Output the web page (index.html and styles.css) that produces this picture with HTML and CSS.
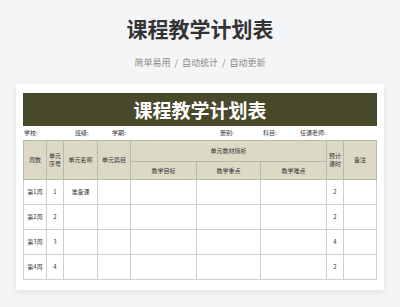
FILE: index.html
```html
<!DOCTYPE html>
<html lang="zh">
<head>
<meta charset="utf-8">
<title>课程教学计划表</title>
<link rel="stylesheet" href="styles.css">
</head>
<body>
<header class="hero">
  <h1 class="hero-title">课程教学计划表</h1>
  <p class="hero-sub"><span>简单易用</span><span class="sep">/</span><span>自动统计</span><span class="sep">/</span><span>自动更新</span></p>
</header>
<main class="card">
  <div class="banner">课程教学计划表</div>
  <div class="info">
    <span class="f-school">学校:</span>
    <span class="f-class">班级:</span>
    <span class="f-term">学期:</span>
    <span class="f-book">册别:</span>
    <span class="f-subject">科目:</span>
    <span class="f-teacher">任课老师:</span>
  </div>
  <table class="plan">
    <colgroup>
      <col class="c1"><col class="c2"><col class="c3"><col class="c4"><col class="c5"><col class="c6"><col class="c7"><col class="c8"><col class="c9">
    </colgroup>
    <thead>
      <tr class="h1">
        <th rowspan="2">周数</th>
        <th rowspan="2">单元<br>序号</th>
        <th rowspan="2">单元名称</th>
        <th rowspan="2">单元篇目</th>
        <th colspan="3">单元教材简析</th>
        <th rowspan="2">预计<br>课时</th>
        <th rowspan="2">备注</th>
      </tr>
      <tr class="h2">
        <th>教学目标</th>
        <th>教学重点</th>
        <th>教学难点</th>
      </tr>
    </thead>
    <tbody>
      <tr><td>第1周</td><td>1</td><td>准备课</td><td></td><td></td><td></td><td></td><td>2</td><td></td></tr>
      <tr><td>第2周</td><td>2</td><td></td><td></td><td></td><td></td><td></td><td>2</td><td></td></tr>
      <tr><td>第3周</td><td>3</td><td></td><td></td><td></td><td></td><td></td><td>4</td><td></td></tr>
      <tr><td>第4周</td><td>4</td><td></td><td></td><td></td><td></td><td></td><td>2</td><td></td></tr>
    </tbody>
  </table>
</main>
</body>
</html>
```
FILE: styles.css
```css
* { box-sizing: border-box; }
html, body { margin: 0; padding: 0; }
body {
  background: #f4f5f7;
  font-family: "Noto Sans CJK SC", "Noto Sans", sans-serif;
  width: 400px;
  height: 307px;
  overflow: hidden;
}
.hero { text-align: center; padding-top: 14px; }
.hero-title {
  margin: 0;
  font-size: 21px;
  line-height: 28px;
  font-weight: 700;
  color: #333;
}
.hero-sub {
  margin: 15px 0 0;
  font-size: 9px;
  line-height: 12px;
  color: #8a8a8a;
}
.hero-sub .sep { margin: 0 4px; }
.card {
  margin: 15px 16px 0;
  background: #fff;
  padding: 9px 7px 10px;
  box-shadow: 0 2px 6px rgba(0,0,0,0.08);
}
.banner {
  height: 33px;
  background: #48482b;
  color: #fff;
  font-size: 19px;
  font-weight: 700;
  line-height: 33px;
  text-align: center;
}
.info {
  position: relative;
  height: 14px;
  font-size: 6px;
  line-height: 14px;
  color: #333;
}
.info span { position: absolute; top: 0; }
.f-school { left: 1px; }
.f-class { left: 52px; }
.f-term { left: 89px; }
.f-book { left: 197px; }
.f-subject { left: 240px; }
.f-teacher { left: 277px; }
.plan {
  width: 353px;
  border-collapse: collapse;
  table-layout: fixed;
  font-size: 6px;
  color: #333;
  border: 1px solid #9a9a9a;
}
.c1 { width: 23px; } .c2 { width: 17px; } .c3 { width: 34px; }
.c4 { width: 33px; } .c5 { width: 66px; } .c6 { width: 64px; }
.c7 { width: 66px; } .c8 { width: 17px; } .c9 { width: 33px; }
.plan th {
  background: #dcd9c6;
  font-weight: 400;
  border: 1px solid #b8b8b0;
  padding: 0;
  line-height: 8px;
  text-align: center;
}
.plan .h1 { height: 21px; }
.plan .h2 { height: 18px; }
.plan td {
  height: 25px;
  border: 1px solid #cfcfcf;
  text-align: center;
  padding: 0;
  line-height: 8px;
}
```
